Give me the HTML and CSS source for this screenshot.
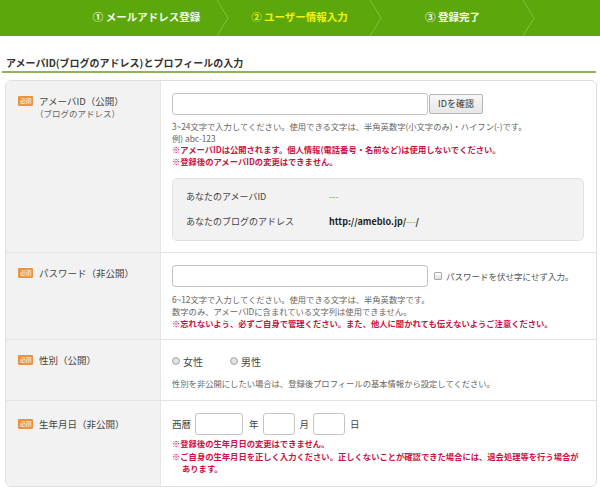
FILE: index.html
```html
<!DOCTYPE html>
<html lang="ja">
<head>
<meta charset="utf-8">
<link rel="stylesheet" href="styles.css">
</head>
<body>
<div class="steps">
  <div class="step"><span class="step-label">① メールアドレス登録</span><svg class="chev" viewBox="0 0 12 36" width="12" height="36"><polyline points="0,0 11,18 0,36" /></svg></div>
  <div class="step active"><span class="step-label">② ユーザー情報入力</span><svg class="chev" viewBox="0 0 12 36" width="12" height="36"><polyline points="0,0 11,18 0,36" /></svg></div>
  <div class="step"><span class="step-label">③ 登録完了</span><svg class="chev" viewBox="0 0 12 36" width="12" height="36"><polyline points="0,0 11,18 0,36" /></svg></div>
</div>

<h2 class="title">アメーバID(ブログのアドレス)とプロフィールの入力</h2>

<div class="form">
  <div class="row row-id">
    <div class="label">
      <div class="label-main"><span class="badge">必須</span>アメーバID（公開）</div>
      <div class="label-sub">（ブログのアドレス）</div>
    </div>
    <div class="field">
      <div class="inline">
        <span class="input w-long"></span>
        <span class="btn">IDを確認</span>
      </div>
      <div class="help first">3~24文字で入力してください。使用できる文字は、半角英数字(小文字のみ)・ハイフン(-)です。<br>例) abc-123</div>
      <div class="warn">※アメーバIDは公開されます。個人情報(電話番号・名前など)は使用しないでください。<br>※登録後のアメーバIDの変更はできません。</div>
      <div class="info">
        <div class="info-row"><span class="info-key">あなたのアメーバID</span><span class="green">---</span></div>
        <div class="info-row"><span class="info-key">あなたのブログのアドレス</span><span class="url">http://ameblo.jp/<span class="green">---</span>/</span></div>
      </div>
    </div>
  </div>

  <div class="row row-pw">
    <div class="label">
      <div class="label-main"><span class="badge">必須</span>パスワード（非公開）</div>
    </div>
    <div class="field">
      <div class="inline">
        <span class="input w-long"></span>
        <span class="check"><span class="box"></span>パスワードを伏せ字にせず入力。</span>
      </div>
      <div class="help first">6~12文字で入力してください。使用できる文字は、半角英数字です。<br>数字のみ、アメーバIDに含まれている文字列は使用できません。</div>
      <div class="warn">※忘れないよう、必ずご自身で管理ください。また、他人に聞かれても伝えないようご注意ください。</div>
    </div>
  </div>

  <div class="row row-sex">
    <div class="label">
      <div class="label-main"><span class="badge">必須</span>性別（公開）</div>
    </div>
    <div class="field">
      <div class="radios">
        <span class="radio"><span class="dot"></span>女性</span>
        <span class="radio"><span class="dot"></span>男性</span>
      </div>
      <div class="help sex-help">性別を非公開にしたい場合は、登録後プロフィールの基本情報から設定してください。</div>
    </div>
  </div>

  <div class="row row-birth">
    <div class="label">
      <div class="label-main"><span class="badge">必須</span>生年月日（非公開）</div>
    </div>
    <div class="field">
      <div class="inline date">
        <span>西暦</span><span class="input w-year"></span>
        <span>年</span><span class="input w-md"></span>
        <span>月</span><span class="input w-md"></span>
        <span>日</span>
      </div>
      <div class="warn birth-warn">※登録後の生年月日の変更はできません。<br>※ご自身の生年月日を正しく入力ください。正しくないことが確認できた場合には、退会処理等を行う場合が<br><span class="indent">あります。</span></div>
    </div>
  </div>
</div>
</body>
</html>
```

FILE: styles.css
```css
* { box-sizing: border-box; }
body {
  margin: 0;
  background: #fff;
  font-family: "Noto Sans CJK JP", "Noto Sans", sans-serif;
  color: #333;
}
.steps {
  height: 36px;
  background: #5ca80c;
  display: flex;
  padding-left: 76px;
}
.step {
  width: 153px;
  display: flex;
  align-items: stretch;
}
.step-label {
  flex: 1;
  text-align: center;
  color: #f4f8ea;
  font-size: 10.5px;
  font-weight: bold;
  line-height: 33px;
}
.step.active .step-label { color: #f2f20a; }
.chev { display: block; }
.chev polyline {
  fill: none;
  stroke: #80bf3e;
  stroke-width: 1;
}
.title {
  margin: 0 4px 0 2px;
  padding: 20px 0 1px 4px;
  font-size: 10px;
  line-height: 14px;
  font-weight: bold;
  color: #333;
  border-bottom: 2px solid #8db45a;
}
.form {
  margin: 7px 3px 0 5px;
  border: 1px solid #dedede;
  border-radius: 6px;
  overflow: hidden;
}
.row {
  display: grid;
  grid-template-columns: 155px 1fr;
  border-top: 1px solid #e3e3e3;
}
.row:first-child { border-top: none; }
.label {
  background: #f2f2f2;
  padding: 14px 0 0 12px;
  border-right: 1px solid #e6e6e6;
}
.label-main {
  display: flex;
  align-items: center;
  font-size: 9.5px;
  line-height: 12px;
  color: #444;
}
.badge {
  display: inline-block;
  width: 15px;
  height: 10px;
  margin-right: 6px;
  background: #e99440;
  color: #fff;
  font-size: 6px;
  line-height: 10px;
  text-align: center;
  border-radius: 1px;
  letter-spacing: -0.5px;
}
.label-sub {
  padding-left: 17px;
  font-size: 8.5px;
  line-height: 12px;
  color: #666;
}
.field {
  padding: 12px 12px 11px 11px;
}
.inline {
  display: flex;
  align-items: center;
  height: 22px;
}
.input {
  display: inline-block;
  height: 22px;
  border: 1px solid #c4c4c4;
  border-radius: 3px;
  background: #fff;
}
.w-long { width: 256px; }
.btn {
  display: inline-block;
  margin-left: 1px;
  height: 20px;
  width: 54px;
  border: 1px solid #b5b5b5;
  border-radius: 2px;
  background: linear-gradient(#f8f8f8, #e6e6e6);
  font-size: 9px;
  line-height: 18px;
  text-align: center;
  color: #333;
}
.help {
  font-size: 8.3px;
  line-height: 12px;
  color: #666;
}
.help.first { margin-top: 5px; }
.warn {
  font-size: 8.3px;
  line-height: 11.5px;
  color: #cc1144;
  font-weight: bold;
}
.info {
  margin-top: 11px;
  background: #f2f2f2;
  border: 1px solid #e2e2e2;
  border-radius: 5px;
  padding: 5px 13px 6px;
}
.info-row {
  display: flex;
  font-size: 9px;
  line-height: 25px;
  color: #444;
}
.info-key { width: 143px; }
.green { color: #6cb33f; }
.url { font-weight: bold; color: #222; }
.url .green { font-weight: normal; }
.row-pw .field { padding-bottom: 10px; }
.row-pw .help.first { margin-top: 6px; }
.row-pw .warn { line-height: 12px; }
.check {
  display: inline-flex;
  align-items: center;
  margin-left: 6px;
  font-size: 8.5px;
  color: #555;
}
.box {
  display: inline-block;
  width: 8px;
  height: 8px;
  border: 1px solid #aaa;
  border-radius: 1px;
  background: linear-gradient(#fff, #ddd);
  margin-right: 4px;
}
.row-sex .field { padding-top: 13px; }
.radios {
  display: flex;
  height: 16px;
  align-items: center;
  font-size: 10px;
  color: #444;
}
.radio {
  display: inline-flex;
  align-items: center;
  width: 58px;
}
.dot {
  display: inline-block;
  width: 8px;
  height: 8px;
  border: 1px solid #aaa;
  border-radius: 50%;
  background: radial-gradient(#eee, #ccc);
  margin-right: 3px;
}
.sex-help { margin-top: 8px; }
.row-birth .label { padding-top: 17px; }
.date {
  font-size: 9.5px;
  color: #444;
}
.date .w-year { width: 48px; margin: 0 6px 0 4px; }
.date .w-md { width: 32px; margin: 0 5px 0 4px; }
.birth-warn { margin-top: 2px; line-height: 12.5px; }
.indent { padding-left: 10px; }
```
